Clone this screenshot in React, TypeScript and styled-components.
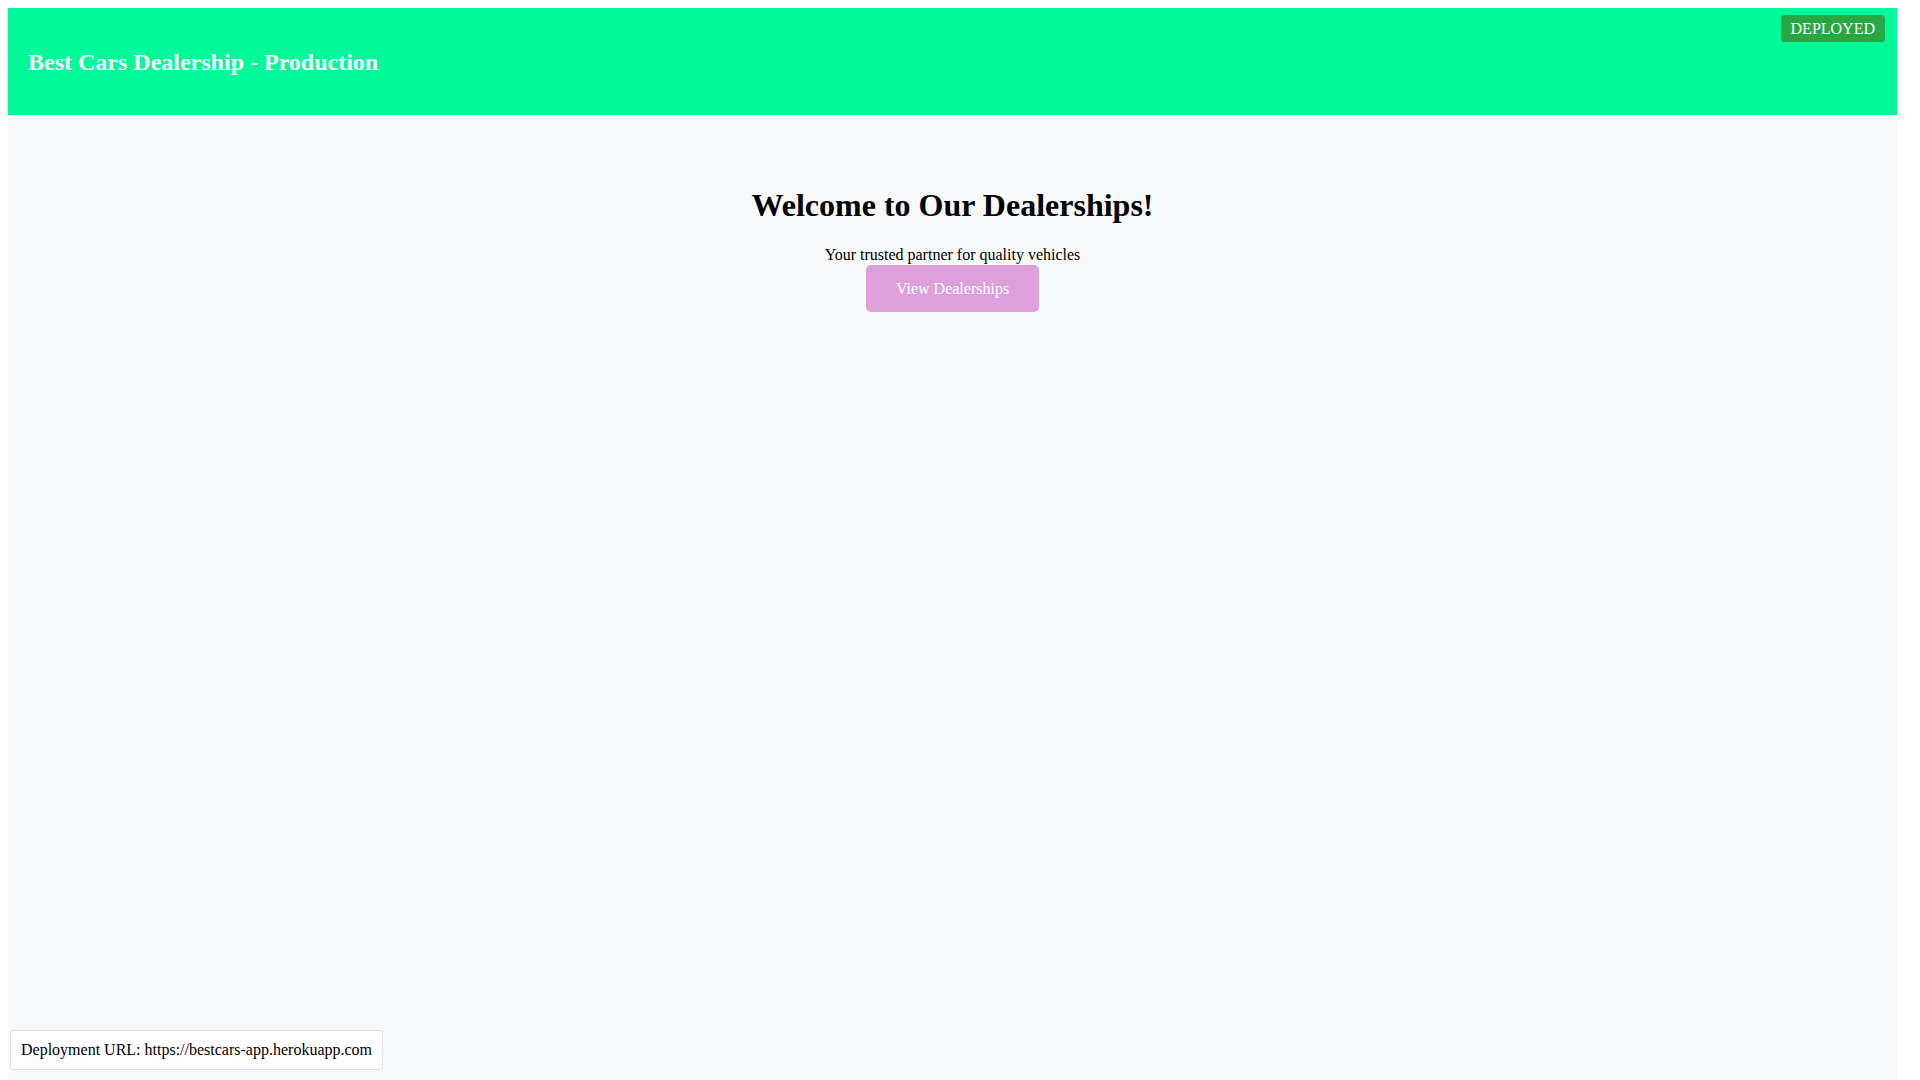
import React from "react";
import styled, { createGlobalStyle } from "styled-components";

const GlobalStyle = createGlobalStyle`
  html, body {
    background: #ffffff;
  }
  body {
    margin: 8px 23px 8px 8px;
    font-family: "Liberation Serif", "Times New Roman", serif;
    font-size: 16px;
    color: #000000;
  }
`;

const Page = styled.div`
  min-height: 100vh;
  background: #f8f9fa;
`;

const Header = styled.header`
  position: relative;
  background: #00fa9a;
  padding: 20px;
`;

const Brand = styled.h2`
  margin: 20.5px 0 19.5px;
  font-size: 24px;
  font-weight: bold;
  color: #ffffff;
`;

const Badge = styled.span`
  position: absolute;
  top: 7px;
  right: 12px;
  background: #28a745;
  color: #ffffff;
  font-size: 16px;
  line-height: 17px;
  padding: 5px 10px;
  border-radius: 4px;
`;

const Hero = styled.main`
  padding: 51px 20px;
  text-align: center;
`;

const Title = styled.h1`
  margin: 21.44px 0;
  font-size: 32px;
  font-weight: bold;
`;

const Subtitle = styled.p`
  margin: 21.44px 0 0;
  font-size: 16px;
`;

const PrimaryButton = styled.button`
  margin-top: 1px;
  background: #dda0dd;
  color: #ffffff;
  border: none;
  border-radius: 5px;
  padding: 15px 30px;
  font-family: "Liberation Serif", "Times New Roman", serif;
  font-size: 16px;
  line-height: 17px;
  cursor: pointer;
`;

const DeployInfo = styled.div`
  position: fixed;
  left: 10px;
  bottom: 10px;
  background: #ffffff;
  border: 1px solid #e3e3e3;
  border-radius: 3px;
  padding: 10px;
  font-size: 16px;
`;

export default function App() {
  return (
    <>
      <GlobalStyle />
      <Page>
        <Header>
          <Brand>Best Cars Dealership - Production</Brand>
          <Badge>DEPLOYED</Badge>
        </Header>
        <Hero>
          <Title>Welcome to Our Dealerships!</Title>
          <Subtitle>Your trusted partner for quality vehicles</Subtitle>
          <PrimaryButton>View Dealerships</PrimaryButton>
        </Hero>
      </Page>
      <DeployInfo>Deployment URL: https://bestcars-app.herokuapp.com</DeployInfo>
    </>
  );
}
